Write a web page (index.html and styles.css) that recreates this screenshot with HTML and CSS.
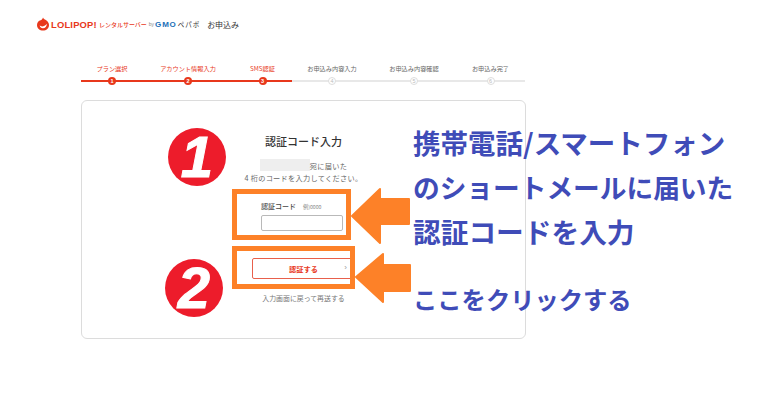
FILE: index.html
```html
<!DOCTYPE html>
<html lang="ja">
<head>
<meta charset="utf-8">
<title>お申込み</title>
<link rel="stylesheet" href="styles.css">
</head>
<body>
<div class="page">
  <header class="head">
    <svg class="flame" viewBox="0 0 12 14" width="12" height="14"><path d="M6 0.5C6.5 2 8 2.4 9.5 3.6C11.2 5 12 6.4 12 8C12 11.4 9.4 13.6 6 13.6C2.6 13.6 0 11.4 0 8C0 5.4 1.8 3.4 3.6 3.2C4.6 3 5.6 2 6 0.5Z" fill="#e8381c"/><path d="M2.6 8.6C4.6 10 7.6 9.6 9.8 6.8C10 9.6 8 11.4 5.8 11.3C4.2 11.2 3 10.2 2.6 8.6Z" fill="#fff"/></svg>
    <span class="brand">LOLIPOP!</span>
    <span class="rental">レンタルサーバー</span>
    <span class="by">by</span>
    <span class="gmo">GMO</span>
    <span class="pepabo">ペパボ</span>
    <span class="apply">お申込み</span>
  </header>
  <ol class="steps">
    <li class="step done"><span class="label">プラン選択</span><span class="dot">1</span></li>
    <li class="step done"><span class="label">アカウント情報入力</span><span class="dot">2</span></li>
    <li class="step done"><span class="label">SMS認証</span><span class="dot">3</span></li>
    <li class="step"><span class="label">お申込み内容入力</span><span class="dot">4</span></li>
    <li class="step"><span class="label">お申込み内容確認</span><span class="dot">5</span></li>
    <li class="step"><span class="label">お申込み完了</span><span class="dot">6</span></li>
  </ol>
  <main class="card">
    <h1 class="title">認証コード入力</h1>
    <p class="desc"><span class="mask"></span>宛に届いた<br>4 桁のコードを入力してください。</p>
    <div class="field">
      <div class="field-label"><b>認証コード</b><span class="eg">例)0000</span></div>
      <div class="input"></div>
    </div>
    <div class="btn"><span>認証する</span><i class="chev">›</i></div>
    <p class="resend">入力画面に戻って再送する</p>
  </main>
</div>
<div class="notes">
  <div class="badge b1">1</div>
  <div class="badge b2">2</div>
  <div class="frame f1"></div>
  <div class="frame f2"></div>
  <svg class="arrows" viewBox="0 0 780 420" width="780" height="420">
    <path d="M352 216L380 189V199H409V224H380V243Z" fill="#fd8128" stroke="#fd8128" stroke-width="2" stroke-linejoin="round"/>
    <path d="M356 277L383 254V265H410V291H383V302Z" fill="#fd8128" stroke="#fd8128" stroke-width="2" stroke-linejoin="round"/>
  </svg>
  <div class="memo m1"><span class="l1">携帯電話/スマートフォン</span><br><span class="l2">のショートメールに届いた</span><br><span class="l3">認証コードを入力</span></div>
  <div class="memo m2">ここをクリックする</div>
</div>
</body>
</html>
```
FILE: styles.css
```css
* { box-sizing: border-box; }
html, body { margin: 0; padding: 0; background: #fff; }
body {
  width: 780px; height: 420px; overflow: hidden; position: relative;
  font-family: "Noto Sans CJK JP", "Noto Sans", sans-serif; color: #444;
}
.page { padding: 17px 0 0 37px; }
.head { display: flex; align-items: center; height: 14px; white-space: nowrap; }
.flame { flex: none; margin-right: 2px; }
.brand { font: 700 9.4px "Liberation Sans", sans-serif; color: #e8381c; letter-spacing: .2px; }
.rental { font-size: 6px; color: #e8381c; margin-left: 2px; font-weight: 500; }
.by { font: 5px "Liberation Sans", sans-serif; color: #888; margin-left: 2px; }
.gmo { font: 700 8px "Liberation Sans", sans-serif; color: #1b6fb8; margin-left: 1px; letter-spacing: .8px; }
.pepabo { font-size: 6.5px; color: #333; margin-left: 1px; letter-spacing: 1px; }
.apply { font-size: 8px; color: #333; margin-left: 7px; }

.steps {
  list-style: none; margin: 33px 0 0 44px; padding: 0; width: 444px;
  display: grid; grid-template-columns: 62px 90px 59px 80px 84px 69px;
}
.step { display: flex; flex-direction: column; align-items: center; position: relative; height: 24px; }
.step::after { content: ""; position: absolute; left: 0; right: 0; top: 16px; height: 2px; background: #e8e8e8; }
.step.done::after { background: #e8381c; }
.label { font-size: 6.2px; line-height: 9px; height: 13px; color: #666; white-space: nowrap; }
.done .label { color: #e8381c; }
.dot {
  position: relative; z-index: 1; width: 8px; height: 8px; border-radius: 50%;
  font: 700 5.5px/8px "Liberation Sans", sans-serif; text-align: center; color: #fff; background: #e8381c;
}
.step:not(.done) .dot { background: #fff; color: #bbb; border: 1px solid #ddd; line-height: 6px; font-weight: 400; }

.card {
  margin: 12px 0 0 44px; width: 445px; height: 239px;
  border: 1px solid #dcdcdc; border-radius: 6px;
  display: flex; flex-direction: column; align-items: center; padding-top: 31px;
}
.title { margin: 0; font-size: 11px; line-height: 18px; font-weight: 500; color: #333; }
.desc { margin: 9px 0 0; font-size: 7.2px; line-height: 12px; text-align: center; color: #666; letter-spacing: .3px; }
.mask { display: inline-block; width: 50px; height: 12px; background: #eee; vertical-align: -2px; }
.field { margin: 17px 3px 0 0; width: 82px; }
.field-label { display: flex; align-items: baseline; height: 11px; line-height: 11px; white-space: nowrap; }
.field-label b { font-size: 7px; font-weight: 500; color: #444; }
.eg { font-size: 5.2px; color: #888; margin-left: 7px; }
.input { margin-top: 3px; height: 16px; border: 1px solid #b9b9b9; border-radius: 2px; background: #fff; }
.btn {
  margin: 27px 3px 0 0; width: 100px; height: 21px; padding-left: 3px; border: 1px solid #e8604c; border-radius: 2px;
  display: flex; align-items: center; justify-content: center; position: relative;
  font-size: 7.2px; font-weight: 700; color: #e8381c;
}
.chev { position: absolute; right: 4px; top: 2px; font: 8px/14px "Liberation Sans", sans-serif; color: #999; }
.resend { margin: 14px 0 0; font-size: 6.9px; line-height: 10px; color: #777; }

.notes { position: absolute; inset: 0; }
.arrows { position: absolute; left: 0; top: 0; }
.frame { position: absolute; border: 5px solid #fd8128; }
.f1 { left: 232px; top: 189px; width: 119px; height: 51px; }
.f2 { left: 232px; top: 246px; width: 123px; height: 43px; }
.badge {
  position: absolute; width: 58px; height: 58px; border-radius: 50%; background: #ed1c2b;
  color: #fff; font: italic 700 58px/58px "Liberation Sans", sans-serif; text-align: center;
  -webkit-text-stroke: 1px #fff;
}
.b1 { left: 168px; top: 128px; }
.b2 { left: 165px; top: 259px; }
.memo {
  position: absolute; left: 413px; white-space: nowrap;
  font-size: 27px; line-height: 44px; font-weight: 700; color: #3f4cb8;
}
.m1 { top: 120px; }
.l1 { font-size: 27.5px; }
.l2 { font-size: 26.7px; }
.l3 { font-size: 27.7px; }
.m2 { top: 277px; font-size: 24.3px; }
```
